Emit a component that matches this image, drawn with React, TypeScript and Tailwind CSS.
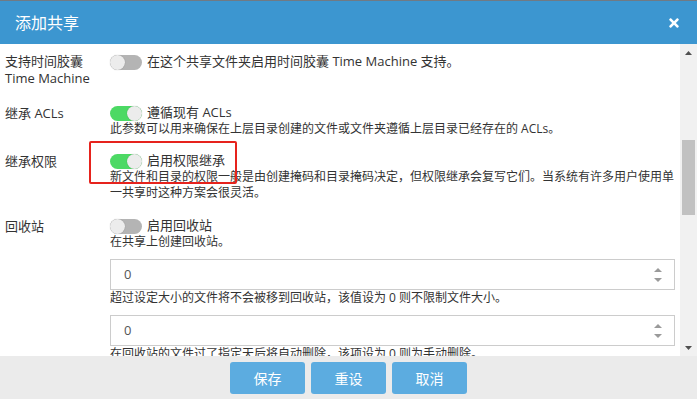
import { FaTimes } from "react-icons/fa";

const font = { fontFamily: '"Open Sans", "Noto Sans CJK SC", sans-serif' };

function Toggle({ on }: { on?: boolean }) {
  return (
    <span
      className={
        "relative inline-flex h-[15px] w-[32px] shrink-0 rounded-full " +
        (on ? "bg-[#4cd964] justify-end" : "bg-[#b4b4b4] justify-start")
      }
    >
      <span className="h-[15px] w-[15px] rounded-full bg-[#ececec] shadow-[0_0_1px_rgba(0,0,0,0.3)]" />
    </span>
  );
}

function Spinner() {
  return (
    <svg width="10" height="16" viewBox="0 0 10 16" className="shrink-0">
      <path d="M1 5 L5 1 L9 5 Z" fill="#9a9a9a" />
      <path d="M1 11 L5 15 L9 11 Z" fill="#9a9a9a" />
    </svg>
  );
}

function NumberBox() {
  return (
    <div className="flex h-[31px] items-center justify-between border border-[#cccccc] bg-white pl-[13px] pr-[11px] text-[13px] text-[#555]">
      <span>0</span>
      <Spinner />
    </div>
  );
}

function Row({
  label,
  children,
  className = "",
}: {
  label: React.ReactNode;
  children: React.ReactNode;
  className?: string;
}) {
  return (
    <div className={"flex " + className}>
      <div className="w-[105px] shrink-0 text-[13px] leading-[17px] text-[#333]">{label}</div>
      <div className="min-w-0 flex-1">{children}</div>
    </div>
  );
}

function Line({ on, text }: { on?: boolean; text: string }) {
  return (
    <div className="flex h-[16px] items-center gap-[5px] text-[13px] text-[#333]">
      <Toggle on={on} />
      <span className="whitespace-nowrap">{text}</span>
    </div>
  );
}

function Desc({ children }: { children: React.ReactNode }) {
  return <p className="text-[12px] leading-[16px] text-[#333]">{children}</p>;
}

export default function App() {
  return (
    <div className="flex h-[399px] w-[697px] flex-col overflow-hidden bg-white" style={font}>
      <div className="flex h-[44px] shrink-0 items-center justify-between border-t border-[#707a84] bg-[#3c96d0] pl-[15px] pr-[16px]">
        <span className="text-[16px] text-white">添加共享</span>
        <FaTimes className="text-white" size={14} />
      </div>

      <div className="flex h-[312px] shrink-0">
        <div className="relative min-w-0 flex-1 overflow-hidden pl-[5px] pr-[5px] pt-[9px]">
          <div className="flex flex-col">
            <Row
              label={
                <>
                  <div>支持时间胶囊</div>
                  <div>Time Machine</div>
                </>
              }
            >
              <div className="mt-[1px]">
                <Line text="在这个共享文件夹启用时间胶囊 Time Machine 支持。" />
              </div>
            </Row>

            <Row label="继承 ACLs" className="mt-[18px]">
              <Line on text="遵循现有 ACLs" />
              <Desc>此参数可以用来确保在上层目录创建的文件或文件夹遵循上层目录已经存在的 ACLs。</Desc>
            </Row>

            <Row label="继承权限" className="mt-[16px]">
              <Line on text="启用权限继承" />
              <Desc>
                新文件和目录的权限一般是由创建掩码和目录掩码决定，但权限继承会复写它们。当系统有许多用户使用单一共享时这种方案会很灵活。
              </Desc>
            </Row>

            <Row label="回收站" className="mt-[17px]">
              <Line text="启用回收站" />
              <Desc>在共享上创建回收站。</Desc>
              <div className="mt-[9px]">
                <NumberBox />
              </div>
              <Desc>超过设定大小的文件将不会被移到回收站，该值设为 0 则不限制文件大小。</Desc>
              <div className="mt-[9px]">
                <NumberBox />
              </div>
              <Desc>在回收站的文件过了指定天后将自动删除，该项设为 0 则为手动删除。</Desc>
            </Row>
          </div>

          <div className="pointer-events-none absolute left-[89px] top-[97px] h-[43px] w-[148px] rounded-[2px] border-[2.5px] border-[#e6231d]" />
        </div>

        <div className="flex w-[17px] shrink-0 flex-col items-center bg-[#f1f1f1]">
          <svg width="17" height="17" viewBox="0 0 17 17" className="shrink-0">
            <path d="M5 11 L8.5 7 L12 11 Z" fill="#505050" />
          </svg>
          <div className="mt-[79px] h-[75px] w-[13px] bg-[#c1c1c1]" />
          <div className="flex-1" />
          <svg width="17" height="17" viewBox="0 0 17 17" className="shrink-0">
            <path d="M5 7 L8.5 11 L12 7 Z" fill="#505050" />
          </svg>
        </div>
      </div>

      <div className="flex flex-1 justify-center gap-[6px] bg-[#ebebeb] pt-[6px]">
        {["保存", "重设", "取消"].map((t) => (
          <button
            key={t}
            className="flex h-[32px] w-[75px] items-center justify-center rounded-[3px] bg-[#5cace0] text-[14px] text-white"
          >
            {t}
          </button>
        ))}
      </div>
    </div>
  );
}
